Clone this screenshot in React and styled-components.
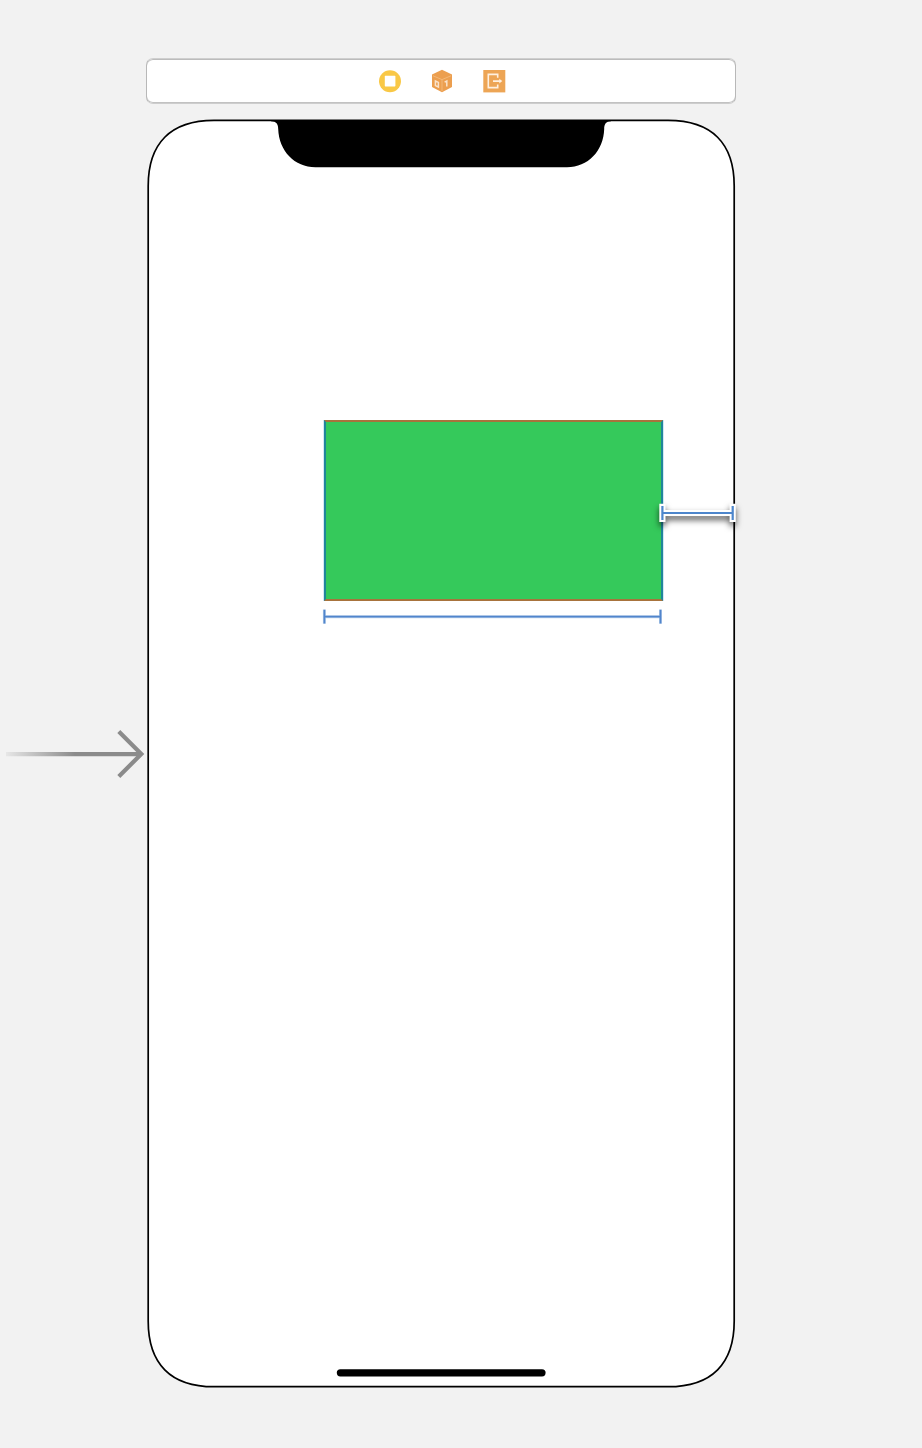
import React from "react";
import styled, { createGlobalStyle } from "styled-components";

const GlobalStyle = createGlobalStyle`
  * { box-sizing: border-box; }
  body { margin: 0; background: #f2f2f2; font-family: "Liberation Sans", sans-serif; }
  svg { display: block; overflow: visible; }
`;

const Canvas = styled.main`
  display: flex;
  width: 922px;
  height: 1448px;
  overflow: hidden;
  background: #f2f2f2;
`;

const EntryGutter = styled.aside`
  flex: 0 0 146px;
  padding-top: 728px;
`;

const Scene = styled.section`
  display: flex;
  flex-direction: column;
  gap: 15px;
  width: 590px;
  padding-top: 58px;
`;

const SceneDock = styled.header`
  display: flex;
  flex: 0 0 46px;
  justify-content: center;
  align-items: center;
  gap: 28px;
  padding-left: 2px;
  border: 1px solid #b8b8b8;
  border-top-color: #cfcfcf;
  border-bottom-color: #cdcdcd;
  border-radius: 7px;
  background: #fff;
  box-shadow: inset 0 1px #bcbcbc, inset 0 -1px #c2c2c2;
`;

const Device = styled.div`
  position: relative;
  height: 1270px;
`;

const Bezel = styled.svg`
  position: absolute;
  left: 0;
  top: 0;
`;

const GreenView = styled.div`
  position: absolute;
  left: 178px;
  top: 301px;
  width: 339px;
  height: 181px;
  background: #35c95b;
  border: solid;
  border-width: 2px;
  border-color: #a8733c #20859a;
  box-shadow: -1px 0 #d3e6f5, 1px 0 #d3e6f5;
`;

const Constraint = styled.svg`
  position: absolute;
  left: ${({ $x }) => $x}px;
  top: ${({ $y }) => $y}px;
  filter: ${({ $selected }) =>
    $selected ? "drop-shadow(0 4px 3px rgba(0, 0, 0, 0.65))" : "none"};
`;

function EntryArrow() {
  return (
    <svg width="146" height="52" viewBox="0 728 146 52" fill="none">
      <defs>
        <linearGradient id="entryFade" gradientUnits="userSpaceOnUse" x1="5" x2="75" y1="0" y2="0">
          <stop stopColor="#e8e8e8" />
          <stop offset="1" stopColor="#8b8b8b" />
        </linearGradient>
      </defs>
      <path d="M6 752H141V756.2H6Z" fill="url(#entryFade)" />
      <path d="M118.8 731.5L141.3 754L118.8 776.5" stroke="#8b8b8b" strokeWidth="4.2" />
    </svg>
  );
}

function ControllerIcon() {
  return (
    <svg width="24" height="24" viewBox="0 0 24 24">
      <circle cx="12" cy="12.2" r="11" fill="#f9c846" />
      <rect x="6.8" y="6.8" width="10.6" height="10.6" rx=".6" fill="#fff" />
    </svg>
  );
}

function ResponderIcon() {
  return (
    <svg width="24" height="24" viewBox="0 0 24 24">
      <path d="M12 .8L22 5.6V18L12 23.2L2 18V5.6Z" fill="#ec9f4f" />
      <path d="M3 6.8L12 10.6L21 6.8M12 10.6V22" fill="none" stroke="#f3b878" strokeWidth="1" />
      <path d="M5.4 12L8.4 13.4V18L5.4 16.6ZM14.6 13.2L16.8 12V17.6" fill="none" stroke="#fae3cb" strokeWidth="1.5" />
    </svg>
  );
}

function ExitIcon() {
  return (
    <svg width="24" height="24" viewBox="0 0 24 24" fill="none">
      <rect x="1.3" y="1" width="22" height="22.4" fill="#eda555" />
      <path d="M15.7 8.8V5.4H6.3V18.6H15.7V15.4M11 12.1H19" stroke="#fff0df" strokeWidth="1.6" />
      <path d="M17.3 9.7L20.3 12.1L17.3 14.5Z" fill="#fff0df" />
    </svg>
  );
}

function DeviceFrame() {
  return (
    <Bezel width="590" height="1270" viewBox="146 119 590 1270">
      <path
        d="M214 120.4H668C712 120.4 734.2 143.5 734.2 186V1321C734.2 1363.5 712 1386.7 668 1386.7H214C170.4 1386.7 148.2 1363.5 148.2 1321V186C148.2 143.5 170.4 120.4 214 120.4Z"
        fill="#fff"
        stroke="#000"
        strokeWidth="1.7"
      />
      <path d="M271 120H611V121.2C606 121.2 604.2 124 604.2 129C603.5 151 588 167.2 567 167.2H315.5C294.5 167.2 279 151 278.2 129C278.2 124 276.4 121.2 271 121.2Z" />
      <rect x="336.8" y="1369.2" width="208.8" height="7.2" rx="3.6" />
    </Bezel>
  );
}

function WidthConstraint() {
  return (
    <Constraint $x={176} $y={488} width="342" height="20" viewBox="322 607 342 20" fill="none">
      <path d="M324.4 609.5V623.8M660.5 609.5V623.8M324.4 616.7H660.5" stroke="#bed3ec" strokeWidth="3" />
      <path d="M324.4 609.8V623.5M660.5 609.8V623.5M324.4 616.7H660.5" stroke="#5185cc" strokeWidth="1.8" />
    </Constraint>
  );
}

function TrailingConstraint() {
  return (
    <Constraint $selected $x={510} $y={381} width="84" height="30" viewBox="656 500 84 30" fill="none">
      <path d="M662.4 503.8V522M732.7 503.8V522M662.4 513H732.7" stroke="#fff" strokeWidth="6.2" />
      <path d="M662.4 506V520M732.7 506V520M662.4 513H732.7" stroke="#4d86cc" strokeWidth="2.2" />
    </Constraint>
  );
}

export default function App() {
  return (
    <>
      <GlobalStyle />
      <Canvas>
        <EntryGutter><EntryArrow /></EntryGutter>
        <Scene>
          <SceneDock>
            <ControllerIcon />
            <ResponderIcon />
            <ExitIcon />
          </SceneDock>
          <Device>
            <DeviceFrame />
            <GreenView />
            <WidthConstraint />
            <TrailingConstraint />
          </Device>
        </Scene>
      </Canvas>
    </>
  );
}
